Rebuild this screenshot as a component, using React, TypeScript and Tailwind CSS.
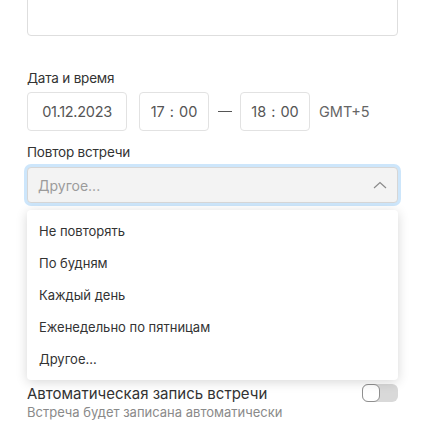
import React from "react";

const items = ["Не повторять", "По будням", "Каждый день", "Еженедельно по пятницам", "Другое..."];

export default function App() {
  return (
    <div className="w-[425px] h-[433px] overflow-hidden bg-white text-[#333]" style={{ fontFamily: "Inter, 'Noto Sans', sans-serif" }}>
      <div className="px-[27px] flex flex-col">
        <div className="-mt-[24px] h-[60px] rounded-[4px] border border-[#dedede]" />

        <div className="mt-[33px] text-[13.5px] leading-[18px] text-[#333] tracking-[-0.2px]">Дата и время</div>
        <div className="mt-[5px] flex items-center">
          <div className="w-[100px] h-[39px] rounded-[4px] border border-[#e2e2e2] flex items-center justify-center text-[14.5px] text-[#555] tracking-[-0.3px]">01.12.2023</div>
          <div className="ml-[12px] w-[70px] h-[39px] rounded-[4px] border border-[#e2e2e2] flex items-center justify-center text-[14.5px] text-[#555] gap-[5px]">
            <span>17</span><span>:</span><span>00</span>
          </div>
          <div className="w-[31px] flex justify-center">
            <div className="w-[14px] h-[1.5px] bg-[#555]" />
          </div>
          <div className="w-[70px] h-[39px] rounded-[4px] border border-[#e2e2e2] flex items-center justify-center text-[14.5px] text-[#555] gap-[5px]">
            <span>18</span><span>:</span><span>00</span>
          </div>
          <div className="ml-[9px] text-[14.5px] text-[#666]">GMT+5</div>
        </div>

        <div className="mt-[12px] text-[13.5px] leading-[18px] text-[#333] tracking-[-0.2px]">Повтор встречи</div>
        <div className="relative mt-[6px]">
          <div className="h-[36px] rounded-[4px] border border-[#d6d6d6] bg-[#f3f3f3] ring-[3px] ring-[#cde6fb] flex items-center justify-between pl-[10px] pr-[10px]">
            <span className="text-[14px] text-[#9b9b9b]">Другое...</span>
            <svg width="14" height="8" viewBox="0 0 14 8" fill="none">
              <path d="M1 7L7 1.5L13 7" stroke="#8a8a8a" strokeWidth="1.2" />
            </svg>
          </div>
          <div className="absolute left-0 right-0 top-[43px] z-10 rounded-[4px] bg-white pt-[6px] pb-[4px] shadow-[0_2px_12px_rgba(0,0,0,0.16)]">
            {items.map((t) => (
              <div key={t} className="h-[32px] flex items-center pl-[12px] text-[13px] text-[#333]">{t}</div>
            ))}
          </div>
        </div>

        <div className="mt-[181px] flex items-start justify-between">
          <div className="flex flex-col">
            <div className="text-[15px] leading-[19px] text-[#333]">Автоматическая запись встречи</div>
            <div className="mt-[1px] text-[13px] leading-[16px] text-[#8a8a8a]">Встреча будет записана автоматически</div>
          </div>
          <div className="w-[36px] h-[18px] rounded-[6px] bg-[#d9d9d9] relative">
            <div className="absolute left-0 top-0 w-[18px] h-[18px] rounded-[6px] bg-white border border-[#8f8f8f]" />
          </div>
        </div>
      </div>
    </div>
  );
}
